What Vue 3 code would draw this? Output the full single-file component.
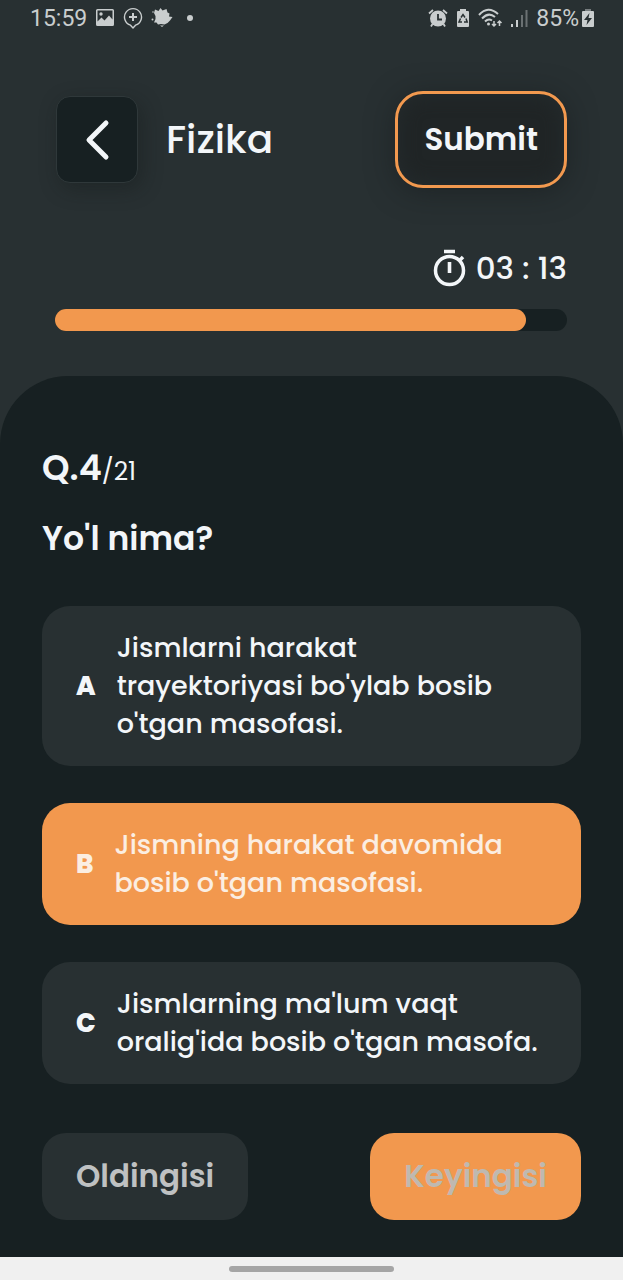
<script setup>
import { ref, computed } from 'vue'

const question = { number: 4, total: 21, text: "Yo'l nima?" }
const answers = [
  { key: 'A', text: "Jismlarni harakat trayektoriyasi bo'ylab bosib o'tgan masofasi." },
  { key: 'B', text: "Jismning harakat davomida bosib o'tgan masofasi." },
  { key: 'C', text: "Jismlarning ma'lum vaqt oralig'ida bosib o'tgan masofa." },
]
const selected = ref('B')
const progress = ref(92)
const barStyle = computed(() => ({ width: `${progress.value}%` }))
</script>

<template>
  <div class="screen">
    <div class="status">
      <div class="status-group">
        <span class="clock">15:59</span>
        <svg width="20" height="20" viewBox="0 0 20 20" aria-hidden="true">
          <path fill="#c9cdce" fill-rule="evenodd" d="M2.500 1h15a1.500 1.500 0 0 1 1.500 1.500v14a1.500 1.500 0 0 1-1.500 1.500h-15A1.500 1.500 0 0 1 1 16.500v-14A1.500 1.500 0 0 1 2.500 1zM2.500 2.500v11l4-4 3 3 4.500-5 3.500 4v-9z" />
          <circle cx="6" cy="6" r="1.700" fill="#c9cdce" />
        </svg>
        <svg width="20" height="24" viewBox="0 0 20 24" fill="none" stroke="#c9cdce" stroke-width="1.400" stroke-linejoin="round" aria-hidden="true">
          <path d="M7.500 19.200A8.500 8.500 0 1 1 12.500 19.200L10 22Z" />
          <path d="M10 7v8M6 11h8" stroke-width="2" />
        </svg>
        <svg width="22" height="22" viewBox="0 0 22 22" fill="#c9cdce" aria-hidden="true">
          <path d="M4 2.500 7.500 4 9.500 1l2 2.500 4-1.500 1 3.500 2 1-.5 3 3.500.5-2.500 3.500-2.500 2.500-3 1.500-3.500-.5-3 .5-1.500-2-2.500 0 1.500-3.500L4.500 9 3 6z" />
          <circle cx="1.500" cy="12.500" r="1" /><circle cx="2" cy="5" r=".800" />
          <path d="M9 18.500h4l-2 1.500z" />
        </svg>
        <span class="dot"></span>
      </div>
      <div class="status-group status-right">
        <svg width="20" height="20" viewBox="0 0 20 20" aria-hidden="true">
          <circle cx="10" cy="10.500" r="8" fill="#c9cdce" />
          <path d="M1 5.500 5 2M19 5.500 15 2M4.500 16 3 18.500M15.500 16l1.500 2.500" fill="none" stroke="#c9cdce" stroke-width="1.800" />
          <path d="M10 6v5.500h4" fill="none" stroke="#283032" stroke-width="1.800" />
        </svg>
        <svg width="14" height="20" viewBox="0 0 14 20" aria-hidden="true">
          <path fill="#c9cdce" d="M4 1h6v2h2a1 1 0 0 1 1 1v14a1 1 0 0 1-1 1H2a1 1 0 0 1-1-1V4a1 1 0 0 1 1-1h2z" />
          <path d="M5 9.500 7 6.500l2 3M10 10.500l1.200 3.500H8M6 14H3l1.500-3.500" fill="none" stroke="#283032" stroke-width="1.500" />
        </svg>
        <svg width="25" height="21" viewBox="0 0 25 21" fill="none" stroke="#c9cdce" stroke-width="2" aria-hidden="true">
          <path d="M1 7Q10-3 20 6M4 10.500Q10.500 3.500 17 9M7 13.500Q10.500 10 14 12.500" />
          <circle cx="10.500" cy="16" r="1.500" fill="#c9cdce" stroke="none" />
          <path d="M16 13v5M14 16l2 2 2-2M21.500 18v-5M19.500 15l2-2 2 2" stroke-width="1.500" />
        </svg>
        <svg width="17" height="20" viewBox="0 0 17 20" aria-hidden="true">
          <path fill="#c9cdce" d="M0 16h2v3H0zM5 12h2v7H5z" />
          <path fill="#6b7173" d="M10 7h2v12h-2zM14.500 2h2v17h-2z" />
        </svg>
        <span class="battery-text">85%</span>
        <svg width="14" height="20" viewBox="0 0 14 20" aria-hidden="true">
          <path fill="#777d7f" d="M4 1h6v3H4z" />
          <rect x="1" y="3" width="12" height="16" rx="1" fill="#c9cdce" />
          <path fill="#283032" d="M8.500 5 3 12h3.500l-1 5 5.500-7H7.500z" />
        </svg>
      </div>
    </div>

    <header class="header">
      <button class="back" type="button" aria-label="Back">
        <svg width="26" height="42" viewBox="0 0 26 42" fill="none" stroke="#f3f6f9" stroke-width="5" stroke-linecap="round" stroke-linejoin="round" aria-hidden="true">
          <path d="M22 4 5 21 22 38" />
        </svg>
      </button>
      <h1 class="title">Fizika</h1>
      <button class="submit" type="button">Submit</button>
    </header>

    <div class="timing">
      <div class="timer">
        <svg width="34" height="38" viewBox="0 0 34 38" fill="none" stroke="#f3f6f9" aria-hidden="true">
          <circle cx="16.500" cy="21.500" r="14" stroke-width="3.500" />
          <path d="M11 2.500h11M16.500 13v11" stroke-width="3.600" />
          <path d="m26 12 4-4" stroke-width="3.500" />
        </svg>
        <span>03 : 13</span>
      </div>
      <div class="track" role="progressbar" aria-label="Time" :aria-valuenow="progress" aria-valuemin="0" aria-valuemax="100">
        <div class="fill" :style="barStyle"></div>
      </div>
    </div>

    <main class="panel">
      <p class="counter"><strong>Q.{{ question.number }}</strong>/{{ question.total }}</p>
      <h2 id="question" class="question">{{ question.text }}</h2>
      <div class="answers" role="radiogroup" aria-labelledby="question">
        <label v-for="answer in answers" :key="answer.key" class="answer" :class="{ chosen: selected === answer.key }">
          <input v-model="selected" class="radio" type="radio" name="answer" :value="answer.key" />
          <span class="letter">{{ answer.key }}</span>
          <span class="answer-text">{{ answer.text }}</span>
        </label>
      </div>
      <div class="actions">
        <button class="step" type="button">Oldingisi</button>
        <button class="step next" type="button">Keyingisi</button>
      </div>
    </main>

    <div class="navbar"><span class="handle"></span></div>
  </div>
</template>

<style>
body {
  background: #283032;
}
</style>

<style scoped>
.screen {
  min-height: 100vh;
  display: flex;
  flex-direction: column;
  background: #283032;
  color: #f3f6f9;
  font-family: Poppins, Inter, "Noto Sans", sans-serif;
}
.screen *,
.screen {
  box-sizing: border-box;
}
button {
  font: inherit;
  color: inherit;
  border: 0;
  cursor: pointer;
}
h1,
h2,
p {
  margin: 0;
}
.status {
  height: 36px;
  padding: 0 28px 0 30px;
  display: flex;
  align-items: center;
  justify-content: space-between;
  color: #c9cdce;
  font-family: Roboto, sans-serif;
  font-size: 23px;
}
.status-group {
  display: flex;
  align-items: center;
  gap: 8px;
}
.status-right {
  gap: 8px;
}
.battery-text {
  margin-right: -6px;
}
.dot {
  width: 6px;
  height: 6px;
  margin-left: 6px;
  border-radius: 50%;
  background: #c9cdce;
}
.header {
  margin-top: 55px;
  padding: 0 56px;
  display: flex;
  align-items: center;
}
.back {
  width: 82px;
  height: 87px;
  padding: 0;
  display: grid;
  place-items: center;
  border: 1px solid #2f383a;
  border-radius: 14px;
  background: #172022;
  box-shadow: 4px 6px 20px rgba(20, 24, 26, 0.4);
}
.title {
  margin-left: 28px;
  font-size: 39px;
  font-weight: 500;
}
.submit {
  margin-left: auto;
  padding: 0 26px;
  height: 97px;
  min-width: 171px;
  border: 3px solid #f2994f;
  border-radius: 28px;
  background: #202526;
  box-shadow: 0 4px 28px rgba(20, 24, 26, 0.5), inset 0 0 20px #252c2e;
  font-size: 31px;
  font-weight: 600;
}
.timing {
  padding: 58px 56px 0 55px;
}
.timer {
  display: flex;
  align-items: center;
  justify-content: flex-end;
  gap: 9px;
  height: 44px;
  font-size: 31px;
  font-weight: 500;
}
.track {
  height: 22px;
  margin-top: 19px;
  border-radius: 11px;
  background: #172022;
}
.fill {
  height: 100%;
  border-radius: 11px;
  background: #f2984e;
}
.panel {
  flex: 1;
  margin-top: 45px;
  padding: 66px 42px 37px;
  border-radius: 68px 68px 0 0;
  background: #172022;
}
.counter {
  font-size: 25px;
  font-weight: 400;
  line-height: 52px;
}
.counter strong {
  font-size: 35px;
  font-weight: 600;
}
.question {
  margin-top: 16px;
  font-size: 33px;
  font-weight: 600;
  line-height: 50px;
}
.answers {
  margin-top: 42px;
  display: flex;
  flex-direction: column;
  gap: 37px;
}
.answer {
  position: relative;
  display: flex;
  align-items: center;
  gap: 21px;
  padding: 23px 34px;
  border-radius: 28px;
  background: #283032;
  font-size: 27px;
  font-weight: 500;
  line-height: 38px;
  cursor: pointer;
}
.chosen {
  background: #f2984e;
  color: #fbeee2;
}
.radio {
  position: absolute;
  inset: 0;
  width: 100%;
  height: 100%;
  margin: 0;
  opacity: 0;
  cursor: pointer;
}
.letter {
  font-size: 26px;
  font-weight: 800;
}
.actions {
  margin-top: 49px;
  display: flex;
  justify-content: space-between;
}
.step {
  height: 87px;
  padding: 0 34px;
  border-radius: 24px;
  background: #283032;
  color: #bfc1c2;
  font-size: 31px;
  font-weight: 600;
}
.next {
  background: #f2984e;
  color: #bfb9b0;
}
.navbar {
  height: 23px;
  display: flex;
  justify-content: center;
  align-items: center;
  background: #f0f0f0;
}
.handle {
  width: 165px;
  height: 6px;
  border-radius: 3px;
  background: #a5a5a5;
}
</style>
